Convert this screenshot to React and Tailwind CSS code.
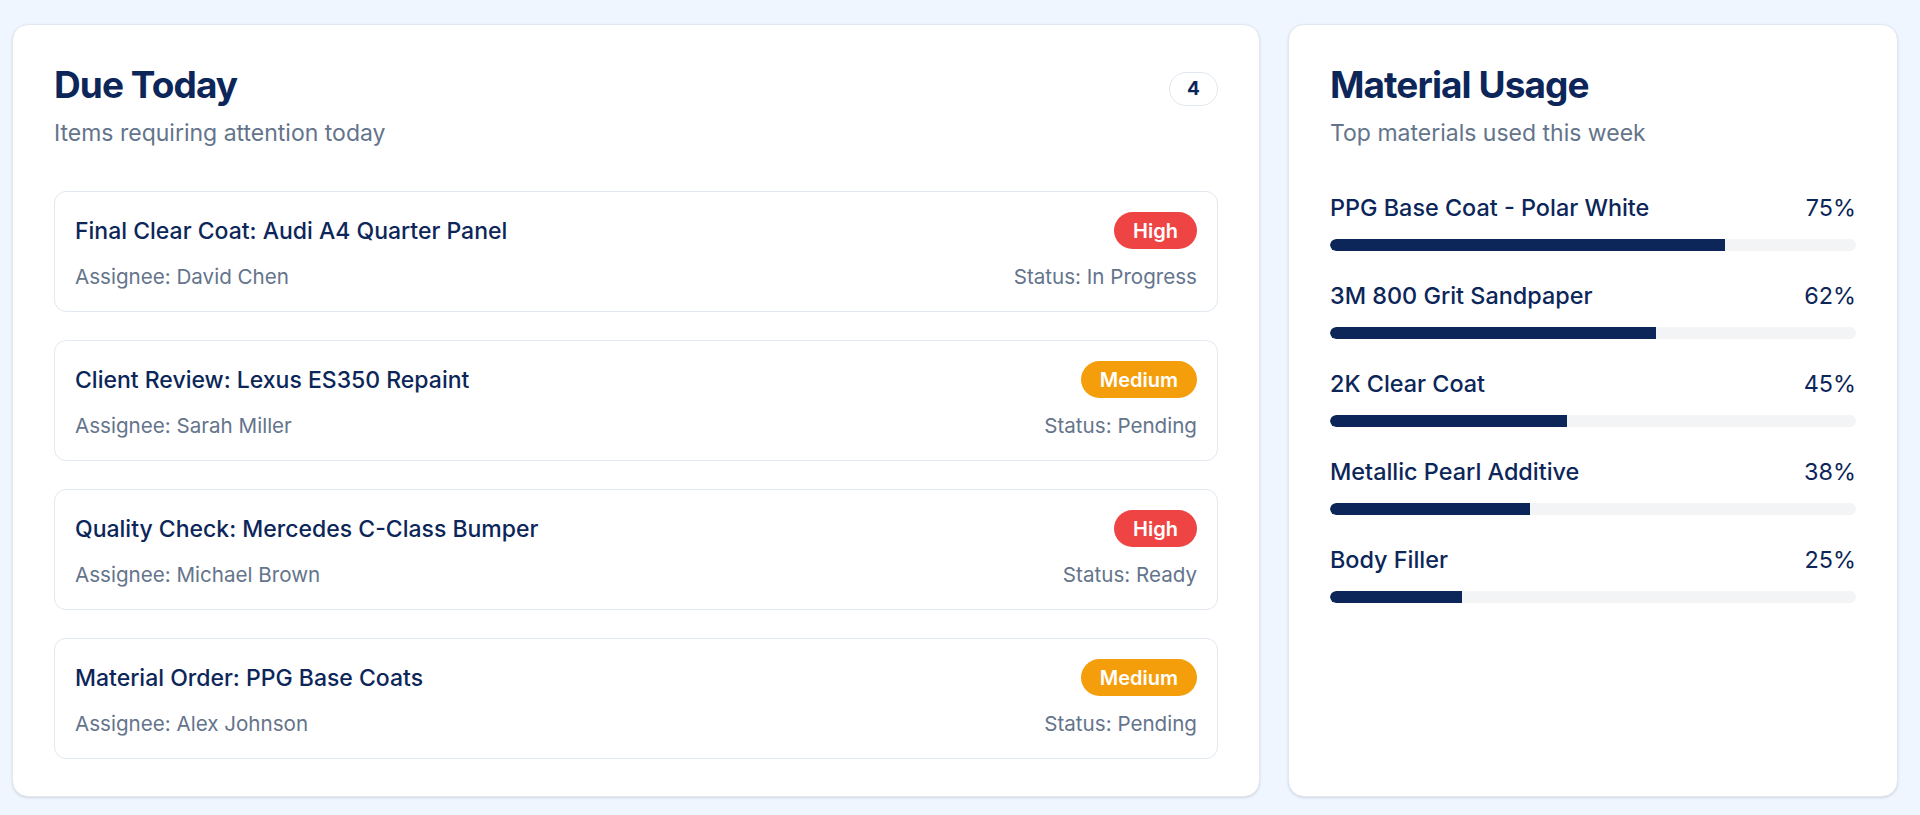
import React from 'react';

const dueItems = [
  { id: 1, title: 'Final Clear Coat: Audi A4 Quarter Panel', priority: 'High', assignee: 'David Chen', status: 'In Progress' },
  { id: 2, title: 'Client Review: Lexus ES350 Repaint', priority: 'Medium', assignee: 'Sarah Miller', status: 'Pending' },
  { id: 3, title: 'Quality Check: Mercedes C-Class Bumper', priority: 'High', assignee: 'Michael Brown', status: 'Ready' },
  { id: 4, title: 'Material Order: PPG Base Coats', priority: 'Medium', assignee: 'Alex Johnson', status: 'Pending' },
];

const materials = [
  { name: 'PPG Base Coat - Polar White', pct: 75 },
  { name: '3M 800 Grit Sandpaper', pct: 62 },
  { name: '2K Clear Coat', pct: 45 },
  { name: 'Metallic Pearl Additive', pct: 38 },
  { name: 'Body Filler', pct: 25 },
];

function PriorityBadge({ priority }) {
  const color = priority === 'High' ? 'bg-[#ef4444]' : 'bg-[#f59e0b]';
  return (
    <span className={`${color} inline-flex h-[37px] items-center rounded-full px-[19px] text-[20px] font-semibold text-white`}>
      {priority}
    </span>
  );
}

function CardHeader({ title, subtitle, children }) {
  return (
    <div className="flex items-start justify-between">
      <div>
        <h2 className="text-[37px] font-bold leading-[40px] tracking-tight text-[#0c2659]">{title}</h2>
        <p className="mt-[14px] text-[23px] leading-[28px] text-[#64748b]">{subtitle}</p>
      </div>
      {children}
    </div>
  );
}

export default function App() {
  return (
    <div className="min-h-screen bg-[#eff6ff] pb-[18px] pl-[12px] pr-[22px] pt-[24px] font-['Inter',sans-serif]">
      <div className="grid h-[773px] grid-cols-3 gap-[28px]">
        {/* Due today */}
        <div className="col-span-2 rounded-2xl border border-[#e2e8f0] bg-white px-[41px] pt-[40px] shadow-sm">
          <CardHeader title="Due Today" subtitle="Items requiring attention today">
            <span className="mt-[7px] inline-flex h-[34px] w-[49px] items-center justify-center rounded-full border border-[#e2e8f0] text-[19px] font-bold text-[#0c2659]">
              4
            </span>
          </CardHeader>

          <div className="mt-[44px] flex flex-col gap-[28px]">
            {dueItems.map(item => (
              <div key={item.id} className="rounded-xl border border-[#e2e8f0] px-[20px] py-[20px]">
                <div className="flex items-center justify-between">
                  <span className="text-[23px] font-medium leading-[28px] text-[#0c2659]">{item.title}</span>
                  <PriorityBadge priority={item.priority} />
                </div>
                <div className="mt-[14px] flex justify-between text-[20.6px] leading-[28px] text-[#64748b]">
                  <span>Assignee: {item.assignee}</span>
                  <span>Status: {item.status}</span>
                </div>
              </div>
            ))}
          </div>
        </div>

        {/* Material usage */}
        <div className="rounded-2xl border border-[#e2e8f0] bg-white px-[41px] pt-[40px] shadow-sm">
          <CardHeader title="Material Usage" subtitle="Top materials used this week" />

          <div className="mt-[47px] flex flex-col gap-[31px]">
            {materials.map(m => (
              <div key={m.name}>
                <div className="flex justify-between text-[23.4px] leading-[28px] text-[#0c2659]">
                  <span className="font-medium">{m.name}</span>
                  <span>{m.pct}%</span>
                </div>
                <div className="mt-[17px] h-[12px] w-full overflow-hidden rounded-full bg-[#f3f4f6]">
                  <div className="h-full rounded-l-full bg-[#0c2659]" style={{ width: `${m.pct}%` }} />
                </div>
              </div>
            ))}
          </div>
        </div>
      </div>
    </div>
  );
}
